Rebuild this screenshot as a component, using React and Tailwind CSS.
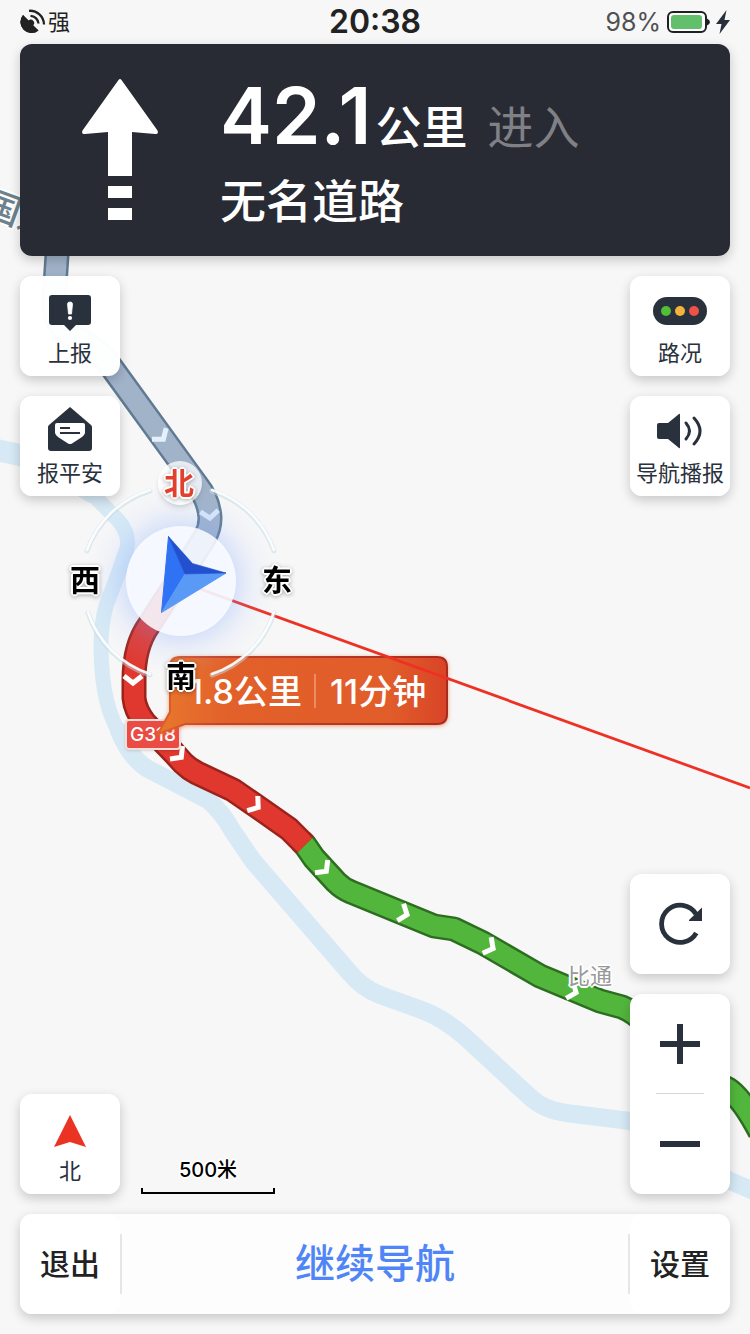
import { clsx } from 'clsx'

const river = {
  west: 'M-4 450 L20 455 L60 472 L92 492',
  bend: 'M88 490 L102 504 L118 520 Q130 534 127 548 L118 574 L106 606 Q101 625 101 645 Q101 678 107 702 Q112 722 124 742',
  south: 'M119 731 Q132 762 152 771 L208 800 Q222 812 232 830 L253 861 L349 972 Q362 988 380 995 L419 1009 Q442 1017 464 1036 L530 1097 Q544 1110 566 1113 L630 1121 L672 1136 L728 1180 L756 1192',
}

const road = {
  grey: 'M58 240 L54 300 Q52 326 76 338 Q98 348 112 368 L197 485 Q209 500 210 518 Q210 528 205 537 L178 580',
  red: 'M178 580 L149 625 Q134 646 134 680 L134 698 Q135 710 145 723 L174 753 L183 763 Q189 769 197 773 L233 790 L262 810 L289 829 L305 845',
  green: 'M301 841 L305 845 L314 858 L336 882 Q343 889 351 892 L434 926 L454 929 L483 943 L540 976 L600 1001 L622 1007 Q634 1012 644 1022 L680 1058 Q692 1070 728 1089 Q742 1098 760 1132',
}

const chevrons = [
  { x: 164, y: 440, angle: 52, color: '#e4f1fc' },
  { x: 210, y: 519, angle: 85, color: '#d9e8fb' },
  { x: 133, y: 684, angle: 90, color: '#fff' },
  { x: 182, y: 758, angle: 44, color: '#fff' },
  { x: 259, y: 808, angle: 36, color: '#fff' },
  { x: 327, y: 872, angle: 45, color: '#fff' },
  { x: 408, y: 915, angle: 20, color: '#fff' },
  { x: 494, y: 949, angle: 28, color: '#fff' },
  { x: 577, y: 993, angle: 22, color: '#fff' },
  { x: 728, y: 1090, angle: 30, color: '#fff' },
]

const outline = '[text-shadow:2px_0_0_#fff,-2px_0_0_#fff,0_2px_0_#fff,0_-2px_0_#fff,1px_1px_0_#fff,-1px_-1px_0_#fff,1px_-1px_0_#fff,-1px_1px_0_#fff]'

const cardShadow = 'shadow-[0_4px_12px_rgba(0,0,0,0.2)]'

function Road({ d, fill, casing }) {
  return (
    <g fill="none" strokeLinejoin="round">
      <path d={d} stroke={casing} strokeWidth="25" />
      <path d={d} stroke={fill} strokeWidth="20" />
    </g>
  )
}

function MapBase() {
  return (
    <svg className="absolute inset-0 h-full w-full" viewBox="0 0 750 1334" preserveAspectRatio="xMinYMin slice" aria-hidden="true">
      <g fill="none" stroke="#d6e9f5" strokeLinejoin="round" strokeLinecap="round">
        <path d={river.west} strokeWidth="22" />
        <path d={river.bend} strokeWidth="15" />
        <path d={river.south} strokeWidth="18" />
      </g>
      <Road d={road.grey} fill="#a1b3c9" casing="#5f7a92" />
      <Road d={road.green} fill="#52b63d" casing="#2c6d20" />
      <Road d={road.red} fill="#e0382f" casing="#9b231c" />
      {chevrons.map(c => (
        <path
          key={`${c.x}-${c.y}`}
          d="M-8 -9 L-1 0 L-8 9"
          transform={`translate(${c.x} ${c.y}) rotate(${c.angle})`}
          fill="none"
          stroke={c.color}
          strokeWidth="5"
        />
      ))}
    </svg>
  )
}

function BubbleShape() {
  return (
    <svg className="absolute inset-0 h-full w-full" viewBox="0 0 750 1334" preserveAspectRatio="xMinYMin slice" aria-hidden="true">
      <defs>
        <linearGradient id="bubble" x1="0" x2="1">
          <stop offset="0" stopColor="#e8772d" />
          <stop offset="0.25" stopColor="#e2602a" />
          <stop offset="0.8" stopColor="#e15d2a" />
          <stop offset="1" stopColor="#d84427" />
        </linearGradient>
        <linearGradient id="bubbleEdge" x1="0" x2="1">
          <stop offset="0" stopColor="#dd6227" />
          <stop offset="0.2" stopColor="#c4452a" />
          <stop offset="1" stopColor="#ab2a20" />
        </linearGradient>
      </defs>
      <path
        d="M180 657 H437 Q447 657 447 667 V714 Q447 724 437 724 H185 L158 734 L170 712 V667 Q170 657 180 657 Z"
        fill="url(#bubble)"
        stroke="url(#bubbleEdge)"
        strokeWidth="2"
        className="drop-shadow-[0_1px_2px_rgba(226,96,42,0.6)]"
      />
      <path d="M315 674 V708" stroke="#ec8c63" strokeWidth="2" />
    </svg>
  )
}

function Vehicle() {
  return (
    <svg className="absolute inset-0 h-full w-full" viewBox="0 0 750 1334" preserveAspectRatio="xMinYMin slice" aria-hidden="true">
      <defs>
        <radialGradient id="glow">
          <stop offset="0.5" stopColor="#6f9bff" stopOpacity="0.3" />
          <stop offset="0.75" stopColor="#8fb0ff" stopOpacity="0.1" />
          <stop offset="1" stopColor="#b8ccff" stopOpacity="0" />
        </radialGradient>
      </defs>
      <path d="M181 582 L750 788" stroke="#ee3124" strokeWidth="2.8" />
      <circle cx="181" cy="581" r="96" fill="url(#glow)" />
      <g fill="none" strokeLinecap="round">
        <g stroke="#c3dae5" strokeWidth="5" opacity="0.5">
          <path d="M150 491 A97 97 0 0 0 87 551" />
          <path d="M212 491 A97 97 0 0 1 274 551" />
          <path d="M88 613 A97 97 0 0 0 150 675" />
          <path d="M274 613 A97 97 0 0 1 212 675" />
        </g>
        <g stroke="#fff" strokeWidth="2.6" opacity="0.9">
          <path d="M150 490 A97 97 0 0 0 87 550" />
          <path d="M212 490 A97 97 0 0 1 274 550" />
          <path d="M88 612 A97 97 0 0 0 150 674" />
          <path d="M274 612 A97 97 0 0 1 212 674" />
        </g>
      </g>
      <circle cx="181" cy="581" r="55" fill="#fbfcff" fillOpacity="0.88" />
      <path d="M168.500 536.500 L185 574 L161.500 612.500 Z" fill="#3072f4" stroke="#3072f4" strokeLinejoin="round" />
      <path d="M226 573 L185 574 L161.500 612.500 Z" fill="#5a9af7" stroke="#5a9af7" strokeLinejoin="round" />
      <path d="M168.500 536.500 L192.500 563.500 L226 573 L185 574 Z" fill="#2350cf" stroke="#2350cf" strokeWidth="0.6" strokeLinejoin="round" />
    </svg>
  )
}

function CompassLetter({ className, children }) {
  return (
    <span className={clsx('absolute text-[30px] leading-8 font-bold drop-shadow-[0_1px_2px_rgba(0,0,0,0.3)]', outline, className)}>{children}</span>
  )
}

function MapView() {
  return (
    <div className="absolute inset-0 overflow-hidden">
      <MapBase />
      <span className={clsx('absolute -left-4 top-[198px] rotate-20 text-[36px] leading-8 font-medium whitespace-nowrap text-[#6d828c]', outline)}>国道</span>
      <span className={clsx('absolute left-[568px] top-[964px] text-[22px] leading-6 text-[#999]', outline)}>比通</span>
      <span className="absolute left-[125px] top-[719px] rounded-sm border-2 border-[#f3dedc] bg-[#ea4c43] px-[3px] text-[19px] leading-[27px] font-medium text-white shadow-sm">G318</span>
      <BubbleShape />
      <div className="absolute left-[189px] top-[672px] flex gap-7 text-[34px] leading-10 font-medium whitespace-nowrap text-white">
        <span>1.8公里</span>
        <span>11分钟</span>
      </div>
      <Vehicle />
      <span className="absolute left-[158px] top-[461px] h-11 w-11 rounded-full bg-white/75 shadow-md" />
      <CompassLetter className="left-[164px] top-[467px] text-[#e2402f]">北</CompassLetter>
      <CompassLetter className="left-[70px] top-[564px] text-black">西</CompassLetter>
      <CompassLetter className="left-[262px] top-[564px] text-black">东</CompassLetter>
      <CompassLetter className="left-[166px] top-[660px] text-black">南</CompassLetter>
    </div>
  )
}

function StatusBar() {
  return (
    <div className="grid h-11 grid-cols-3 items-center px-5 text-[#222]">
      <div className="flex items-center gap-[2px]">
        <svg className="h-[26px] w-[26px]" viewBox="0 0 26 26" aria-hidden="true">
          <path d="M3 6 L8.500 11.500 A3.300 3.300 0 1 1 13 16.500 L18.500 21.500 A11 11 0 0 1 3 6 Z" fill="#222" />
          <path d="M3 6 L18.500 21.500 A11 11 0 0 1 3 6 Z" fill="#222" />
          <path d="M10.500 6.800 A8.600 8.600 0 0 1 18.500 14.500 M9 1.800 A14 14 0 0 1 24 15.500" fill="none" stroke="#222" strokeWidth="2.300" />
        </svg>
        <span className="text-[22px] leading-6">强</span>
      </div>
      <span className="text-center text-[32px] leading-8 font-semibold">20:38</span>
      <div className="flex items-center justify-end gap-[6px]">
        <span className="text-[25px] leading-8 text-[#505050]">98%</span>
        <svg className="h-[22px] w-[43px]" viewBox="0 0 43 22" aria-hidden="true">
          <rect x="1" y="1" width="38" height="20" rx="5" fill="#fff" stroke="#1f2022" strokeWidth="2" />
          <rect x="4" y="4" width="31" height="14" rx="3" fill="#62c06c" />
          <path d="M40 7.500 Q43 9 43 11 Q43 13 40 14.500 Z" fill="#1f2022" />
        </svg>
        <svg className="h-6 w-[14px]" viewBox="0 0 14 24" aria-hidden="true">
          <path d="M10.500 0 L0 14 H5.500 L3.500 24 L14 10 H8.500 Z" fill="#272f3a" />
        </svg>
      </div>
    </div>
  )
}

function TurnPanel() {
  return (
    <section className={clsx('flex h-[212px] items-center rounded-xl bg-[#292b34] text-white', cardShadow)}>
      <div className="flex w-[200px] shrink-0 justify-center">
        <svg className="h-[142px] w-[76px]" viewBox="0 0 76 142" aria-label="直行" role="img">
          <path d="M36.500 1 Q38 -1 39.500 1 L75.500 51.500 Q77 55 73 55 L50 53 V97 H26 V53 L3 55 Q-1 55 0.500 51.500 Z" fill="#fff" />
          <path d="M26 107 H50 V119 H26 Z M26 129 H50 V141 H26 Z" fill="#fff" />
        </svg>
      </div>
      <div className="pt-[2px]">
        <p className="flex items-baseline leading-[88px]">
          <span className="text-[78px] font-semibold">42.1</span>
          <span className="ml-1 text-[46px] font-medium">公里</span>
          <span className="ml-5 text-[46px] text-[#808186]">进入</span>
        </p>
        <p className="text-[46px] leading-[60px] font-medium">无名道路</p>
      </div>
    </section>
  )
}

function MapButton({ label, wide, children }) {
  return (
    <button type="button" className={clsx('flex h-[100px] w-[100px] flex-col items-center gap-1 rounded-xl bg-white/98 pt-3 text-[#29313c]', cardShadow)}>
      <svg className={clsx('h-12 shrink-0 overflow-visible', wide ? 'w-14' : 'w-12')} viewBox={wide ? '0 0 56 48' : '0 0 48 48'} aria-hidden="true">
        {children}
      </svg>
      <span className="text-[22px] leading-[26px] whitespace-nowrap">{label}</span>
    </button>
  )
}

export default function App() {
  return (
    <main className="relative flex min-h-screen flex-col bg-[#f7f7f7] font-['Inter','Noto_Sans_CJK_SC',sans-serif]" lang="zh-CN">
      <MapView />

      <div className="relative flex flex-1 flex-col">
        <StatusBar />

        <div className="flex flex-1 flex-col gap-5 px-5 pb-5">
          <TurnPanel />

          <div className="flex justify-between">
            <div className="flex flex-col gap-5">
              <MapButton label="上报">
                <path d="M6 7 H42 Q45 7 45 10 V34 Q45 37 42 37 H30 L24 43 L18 37 H6 Q3 37 3 34 V10 Q3 7 6 7 Z" fill="#29313c" />
                <path d="M21.500 16 Q21.500 14 24 14 Q26.500 14 26.500 16 L25.500 26 H22.500 Z" fill="#fff" stroke="#fff" strokeLinejoin="round" strokeWidth="0.800" />
                <circle cx="24" cy="30" r="2.100" fill="#fff" />
              </MapButton>
              <MapButton label="报平安">
                <path d="M24 -1 L45 17 Q46 18 46 19 V40 Q46 43 43 43 H5 Q2 43 2 40 V19 Q2 18 3 17 Z" fill="#29313c" />
                <path d="M11 15 H37 Q39 15 39 17 V25 Q38.500 27 36 29 L26 35.500 Q24 36.500 22 35.500 L12 29 Q9.500 27 9 25 V17 Q9 15 11 15 Z" fill="#fff" />
                <path d="M14 20 H24 M14 25 H34" stroke="#29313c" strokeWidth="2" />
              </MapButton>
            </div>
            <div className="flex flex-col gap-5">
              <MapButton label="路况" wide>
                <rect x="1" y="9" width="54" height="28" rx="14" fill="#29313c" />
                <circle cx="14" cy="23" r="5" fill="#52bd37" />
                <circle cx="28" cy="23" r="5" fill="#f4b33a" />
                <circle cx="42" cy="23" r="5" fill="#ee5148" />
              </MapButton>
              <MapButton label="导航播报" wide>
                <path d="M5 17 Q5 15 7 15 H16 L27 6 Q28 5 28 7 V39 Q28 41 27 40 L16 31 H7 Q5 31 5 29 Z" fill="#29313c" />
                <path d="M34 15 Q41 23 34 31 M42 10 Q54 23 42 36" fill="none" stroke="#29313c" strokeWidth="3" strokeLinecap="round" />
              </MapButton>
            </div>
          </div>

          <div className="mt-auto flex items-end justify-between">
            <div className="flex items-end gap-[21px]">
              <MapButton label="北">
                <path d="M24 9 L40 41 L24 36 L8 41 Z" fill="#ea3323" />
              </MapButton>
              <div className="flex w-[134px] flex-col items-center gap-1">
                <span className={clsx('text-[20px] leading-7 font-medium text-black', outline)}>500米</span>
                <span className="h-[6px] w-full border-2 border-t-0 border-black" />
              </div>
            </div>
            <div className="flex flex-col gap-5">
              <button type="button" aria-label="刷新" className={clsx('flex h-[100px] w-[100px] items-center justify-center rounded-xl bg-white/98', cardShadow)}>
                <svg className="h-12 w-12" viewBox="0 0 48 48" aria-hidden="true">
                  <path d="M40 14 A18.600 18.600 0 1 0 40.300 33" fill="none" stroke="#29313c" strokeWidth="4.800" />
                  <path d="M46 7.500 V21 H33 V20 Z" fill="#29313c" />
                </svg>
              </button>
              <div className={clsx('flex w-[100px] flex-col items-center rounded-xl bg-white', cardShadow)}>
                <button type="button" aria-label="放大" className="flex h-[99px] w-full items-center justify-center">
                  <svg className="h-10 w-10" viewBox="0 0 40 40" aria-hidden="true">
                    <path d="M0 20 H40 M20 0 V40" stroke="#29313c" strokeWidth="6" />
                  </svg>
                </button>
                <span className="h-px w-12 bg-[#d8d8d8]" />
                <button type="button" aria-label="缩小" className="flex h-[100px] w-full items-center justify-center">
                  <svg className="h-10 w-10" viewBox="0 0 40 40" aria-hidden="true">
                    <path d="M0 20 H40" stroke="#29313c" strokeWidth="6" />
                  </svg>
                </button>
              </div>
            </div>
          </div>

          <nav className={clsx('flex h-[100px] items-center rounded-xl bg-[#fdfdfd] text-[#222]', cardShadow)}>
            <button type="button" className="h-full w-[100px] rounded-xl bg-white text-[30px] font-medium">退出</button>
            <span className="h-[60px] w-[2px] bg-[#e6e6e6]" />
            <button type="button" className="h-full flex-1 text-[40px] font-medium text-[#4f85f6]">继续导航</button>
            <span className="h-[60px] w-[2px] bg-[#e6e6e6]" />
            <button type="button" className="h-full w-[100px] rounded-xl bg-white text-[30px] font-medium">设置</button>
          </nav>
        </div>
      </div>
    </main>
  )
}
